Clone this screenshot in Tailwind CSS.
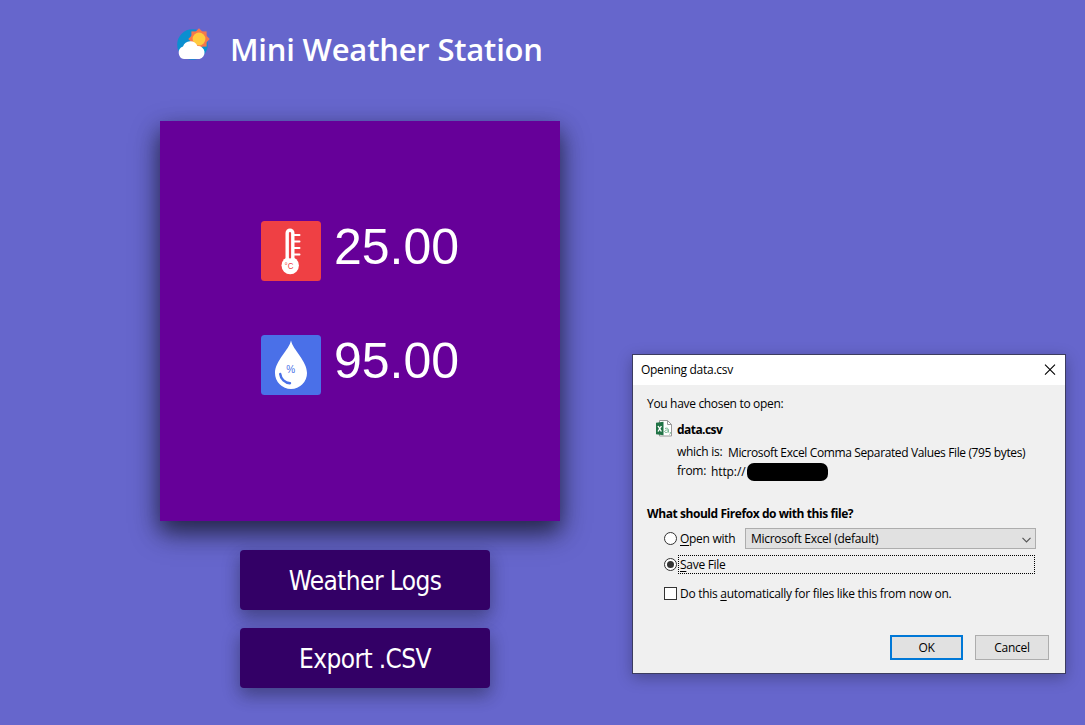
<!DOCTYPE html>
<html lang="en">
<head>
<meta charset="utf-8">
<title>Mini Weather Station</title>
<script src="https://cdn.jsdelivr.net/npm/@tailwindcss/browser@4"></script>
</head>
<body class="relative h-[725px] w-[1085px] overflow-hidden bg-[#6666cc]">
<main class="flex w-[720px] flex-col items-center">
  <header class="flex h-[121px] w-full items-start pt-[27px] pl-[176px]">
    <svg class="h-[34px] w-[34px] shrink-0" viewBox="0 0 34 34">
      <circle cx="16.500" cy="17.500" r="15.300" fill="#0a8fd0"/>
      <g fill="#f5774d" transform="translate(23 12)">
        <rect x="-7.600" y="-7.600" width="15.200" height="15.200"/>
        <rect x="-7.600" y="-7.600" width="15.200" height="15.200" transform="rotate(45)"/>
      </g>
      <circle cx="23" cy="12" r="6.400" fill="#ffca3f"/>
      <path d="M8 32a6.500 6.500 0 0 1-1-12.500A7.800 7.800 0 0 1 21.500 19a6.600 6.600 0 0 1 2 13z" fill="#fff"/>
    </svg>
    <h1 class="ml-[20px] -mt-px font-['Trebuchet_MS','Open_Sans',sans-serif] text-[31px] leading-[46px] font-semibold tracking-[-0.2px] whitespace-nowrap text-white">Mini Weather Station</h1>
  </header>
  <section class="flex h-[400px] w-[400px] flex-col gap-[54px] bg-[#660099] pt-[100px] pl-[101px] shadow-[0_10px_20px_rgba(0,0,0,0.4),0_12px_28px_rgba(0,0,0,0.4)]">
    <div class="flex h-[60px] gap-[13px]">
      <svg class="h-[60px] w-[60px]" viewBox="0 0 60 60">
        <rect width="60" height="60" rx="3.500" fill="#ef4044"/>
        <path d="M29 12v30" stroke="#fff" stroke-width="9" stroke-linecap="round"/>
        <circle cx="29.200" cy="44.500" r="8.700" fill="#fff"/>
        <path d="M29 12v24.500" stroke="#ef4044" stroke-width="2.200" stroke-linecap="round"/>
        <path d="M33 14h5.500M33 20.500h5.500M33 27h5.500M33 33.500h5.500" stroke="#fff" stroke-width="2" stroke-linecap="round"/>
        <text x="23.500" y="48" font-family="Liberation Sans" font-size="8.500" textLength="9" lengthAdjust="spacingAndGlyphs" fill="#ef4044">°C</text>
      </svg>
      <span class="font-['Liberation_Sans',sans-serif] text-[50px] leading-[52px] text-white">25.00</span>
    </div>
    <div class="flex h-[60px] gap-[13px]">
      <svg class="h-[60px] w-[60px]" viewBox="0 0 60 60">
        <rect width="60" height="60" rx="3.500" fill="#4a70e8"/>
        <path d="M30 5.500C32 15 46 26 46 38a16 16 0 0 1-32 0C14 26 28 15 30 5.500z" fill="#fff"/>
        <path d="M19.200 39a10.500 10.500 0 0 0 9.800 9.300" fill="none" stroke="#4a70e8" stroke-width="2.400" stroke-linecap="round"/>
        <text x="25.300" y="38" font-family="Liberation Sans" font-size="10" fill="#4a70e8">%</text>
      </svg>
      <span class="font-['Liberation_Sans',sans-serif] text-[50px] leading-[52px] text-white">95.00</span>
    </div>
  </section>
  <nav class="mt-[29px] ml-[10px] flex flex-col gap-[18px] font-[Tahoma,'DejaVu_Sans_Condensed','DejaVu_Sans',sans-serif] text-[26px] tracking-[-0.6px] text-white">
    <button class="h-[60px] w-[250px] rounded-[4px] bg-[#330066] pt-[3px] shadow-[0_8px_16px_rgba(0,0,0,0.2),0_6px_20px_rgba(0,0,0,0.19)]">Weather Logs</button>
    <button class="h-[60px] w-[250px] rounded-[4px] bg-[#330066] pt-[3px] shadow-[0_8px_16px_rgba(0,0,0,0.2),0_6px_20px_rgba(0,0,0,0.19)]">Export .CSV</button>
  </nav>
</main>

<div class="absolute top-[354px] left-[632px] flex h-[320px] w-[434px] flex-col border border-[#3c3c60] bg-[#f0f0f0] font-['Segoe_UI','Open_Sans',sans-serif] text-[12px] leading-[18px] tracking-[-0.28px] whitespace-nowrap text-black shadow-[0_4px_14px_rgba(0,0,0,0.28)]">
  <div class="flex h-[30px] items-center justify-between bg-white pr-[9px] pl-[8px]">
    <span>Opening data.csv</span>
    <svg class="h-[12px] w-[12px]" viewBox="0 0 12 12"><path d="M1 .7l10 10M11 .7l-10 10" stroke="#000" stroke-width="1.100"/></svg>
  </div>
  <div class="flex flex-col pt-[10px] pl-[14px]">
    <div class="tracking-[-0.32px]">You have chosen to open:</div>
    <div class="mt-[7px] flex pl-[9px] font-bold tracking-[-0.55px]">
      <svg class="h-[17px] w-[16px]" viewBox="0 0 16 17">
        <path d="M3.500.5h8l4 4v11.500h-12z" fill="#fff" stroke="#999"/>
        <path d="M11.500.5v4h4" fill="none" stroke="#999"/>
        <path d="M0 2.800l7.500-1v13.400l-7.500-1z" fill="#217346"/>
        <path d="M2 6l3.400 5.500M5.400 6L2 11.500" stroke="#fff" stroke-width="1.400"/>
        <path d="M9 8.500c3-1 3.500 0 3.500 4M12.500 10c-5-.5-4.500 3-2 2.500q1.500-.2 2-1.500M14.300 12v1.500l-.8 1" fill="none" stroke="#73b58f"/>
      </svg>
      <span class="ml-[5px] h-[18px] pt-px">data.csv</span>
    </div>
    <div class="mt-[5px] flex pl-[30px]"><span class="w-[45px]">which is:</span><span class="ml-[6px] pt-px tracking-[-0.37px]">Microsoft Excel Comma Separated Values File (795 bytes)</span></div>
    <div class="flex h-[19px] pl-[30px]"><span class="w-[28px]">from:</span><span class="ml-[6px] w-[34px] pt-px tracking-[-0.1px]">http://</span><span class="mt-px ml-[2px] h-[18px] w-[81px] rounded-[7px] bg-black"></span></div>
    <div class="mt-[24px] font-bold tracking-[-0.43px]">What should Firefox do with this file?</div>
    <div class="mt-[5px] flex h-[21px] items-center pl-[17px]">
      <span class="h-[13px] w-[13px] rounded-full border border-[#333] bg-white"></span>
      <span class="ml-[3px] w-[65px]"><u class="underline-offset-2">O</u>pen with</span>
      <span class="flex h-[21px] w-[291px] items-center justify-between border border-[#adadad] bg-[#e1e1e1] pr-[4px] pl-[5px]">Microsoft Excel (default)
        <svg class="mt-[2px] h-[6px] w-[9px]" viewBox="0 0 9 6"><path d="M.5.800l4 4 4-4" fill="none" stroke="#555" stroke-width="1.200"/></svg>
      </span>
    </div>
    <div class="mt-[6px] flex h-[19px] items-center pl-[17px]">
      <span class="flex h-[13px] w-[13px] items-center justify-center rounded-full border border-[#333] bg-white"><span class="h-[7px] w-[7px] rounded-full bg-[#333]"></span></span>
      <span class="ml-px flex h-[19px] w-[357px] items-center border border-dotted border-black pl-px"><span><u class="underline-offset-2">S</u>ave File</span></span>
    </div>
    <div class="mt-[10px] flex h-[18px] items-center pl-[17px]">
      <span class="h-[13px] w-[13px] border border-[#333] bg-white"></span>
      <span class="ml-[3px] pt-px">Do this <u class="underline-offset-2">a</u>utomatically for files like this from now on.</span>
    </div>
  </div>
  <div class="mt-[33px] flex justify-end gap-[12px] pr-[16px]">
    <button class="h-[25px] w-[73px] border-2 border-[#0078d7] bg-[#e1e1e1]">OK</button>
    <button class="h-[25px] w-[74px] border border-[#adadad] bg-[#e1e1e1]">Cancel</button>
  </div>
</div>
</body>
</html>
